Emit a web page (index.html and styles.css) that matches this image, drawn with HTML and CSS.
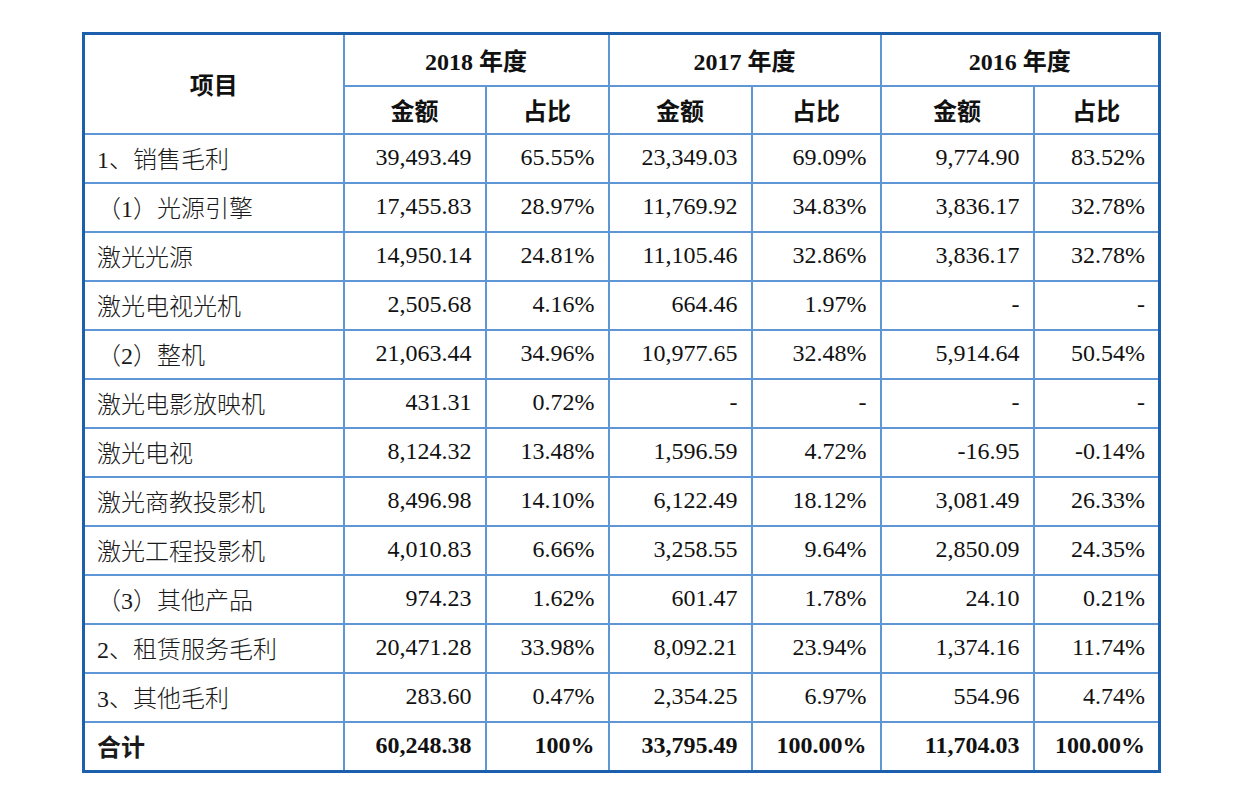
FILE: index.html
```html
<!DOCTYPE html>
<html lang="zh">
<head>
<meta charset="utf-8">
<link rel="stylesheet" href="styles.css">
</head>
<body>
<table class="data">
  <colgroup>
    <col class="c-item">
    <col class="c-a18"><col class="c-p18">
    <col class="c-a17"><col class="c-p17">
    <col class="c-a16"><col class="c-p16">
  </colgroup>
  <thead>
    <tr class="h1">
      <th rowspan="2" class="item-h">项目</th>
      <th colspan="2">2018 年度</th>
      <th colspan="2">2017 年度</th>
      <th colspan="2">2016 年度</th>
    </tr>
    <tr class="h2">
      <th>金额</th><th>占比</th>
      <th>金额</th><th>占比</th>
      <th>金额</th><th>占比</th>
    </tr>
  </thead>
  <tbody>
    <tr><td class="lbl">1、销售毛利</td><td>39,493.49</td><td>65.55%</td><td>23,349.03</td><td>69.09%</td><td>9,774.90</td><td>83.52%</td></tr>
    <tr><td class="lbl">（1）光源引擎</td><td>17,455.83</td><td>28.97%</td><td>11,769.92</td><td>34.83%</td><td>3,836.17</td><td>32.78%</td></tr>
    <tr><td class="lbl">激光光源</td><td>14,950.14</td><td>24.81%</td><td>11,105.46</td><td>32.86%</td><td>3,836.17</td><td>32.78%</td></tr>
    <tr><td class="lbl">激光电视光机</td><td>2,505.68</td><td>4.16%</td><td>664.46</td><td>1.97%</td><td>-</td><td>-</td></tr>
    <tr><td class="lbl">（2）整机</td><td>21,063.44</td><td>34.96%</td><td>10,977.65</td><td>32.48%</td><td>5,914.64</td><td>50.54%</td></tr>
    <tr><td class="lbl">激光电影放映机</td><td>431.31</td><td>0.72%</td><td>-</td><td>-</td><td>-</td><td>-</td></tr>
    <tr><td class="lbl">激光电视</td><td>8,124.32</td><td>13.48%</td><td>1,596.59</td><td>4.72%</td><td>-16.95</td><td>-0.14%</td></tr>
    <tr><td class="lbl">激光商教投影机</td><td>8,496.98</td><td>14.10%</td><td>6,122.49</td><td>18.12%</td><td>3,081.49</td><td>26.33%</td></tr>
    <tr><td class="lbl">激光工程投影机</td><td>4,010.83</td><td>6.66%</td><td>3,258.55</td><td>9.64%</td><td>2,850.09</td><td>24.35%</td></tr>
    <tr><td class="lbl">（3）其他产品</td><td>974.23</td><td>1.62%</td><td>601.47</td><td>1.78%</td><td>24.10</td><td>0.21%</td></tr>
    <tr><td class="lbl">2、租赁服务毛利</td><td>20,471.28</td><td>33.98%</td><td>8,092.21</td><td>23.94%</td><td>1,374.16</td><td>11.74%</td></tr>
    <tr><td class="lbl">3、其他毛利</td><td>283.60</td><td>0.47%</td><td>2,354.25</td><td>6.97%</td><td>554.96</td><td>4.74%</td></tr>
    <tr class="total"><td class="lbl">合计</td><td>60,248.38</td><td>100%</td><td>33,795.49</td><td>100.00%</td><td>11,704.03</td><td>100.00%</td></tr>
  </tbody>
</table>
</body>
</html>
```
FILE: styles.css
```css
html, body {
  margin: 0;
  padding: 0;
  background: #ffffff;
}
body {
  padding: 32px 0 0 82px;
  font-family: "Liberation Serif", "Noto Sans CJK SC", serif;
  color: #111111;
}
.data {
  border-collapse: collapse;
  table-layout: fixed;
  width: 1079px;
  border: 3px solid #1c5fad;
  font-size: 24px;
}
.c-item { width: 260px; }
.c-a18 { width: 142px; }
.c-p18 { width: 123px; }
.c-a17 { width: 143px; }
.c-p17 { width: 129px; }
.c-a16 { width: 153px; }
.c-p16 { width: 126px; }

.data th, .data td {
  border: 2px solid #5f97d6;
  padding: 0 13px 2px;
  white-space: nowrap;
}
.data th {
  font-weight: 700;
  text-align: center;
  color: #111111;
}
.h1 th { height: 48px; }
.h2 th { height: 44px; }
.data td {
  height: 44px;
  padding-bottom: 3px;
  text-align: right;
  font-weight: 400;
}
.data td.lbl {
  text-align: left;
  font-weight: 300;
  color: #1a1a1a;
  padding-left: 12px;
}
.total td { font-weight: 700; }
.total td.lbl { font-weight: 700; }
```
